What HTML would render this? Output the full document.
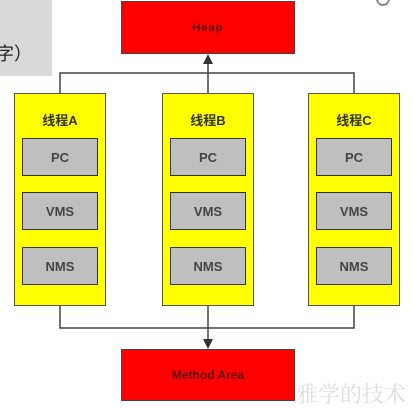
<!DOCTYPE html>
<html><head><meta charset="utf-8"><style>
body{margin:0;width:413px;height:408px;background:#fff;position:relative;overflow:hidden;font-family:"Liberation Sans","Noto Sans CJK SC",sans-serif}
.a{position:absolute;box-sizing:border-box}
.red{background:#f00;border:1.5px solid #444;color:#5a1010;font-weight:bold;font-size:11px;display:flex;align-items:center;justify-content:center;letter-spacing:1px}
.th{background:#ff0;border:1.5px solid #555;width:92px;top:93px;height:213px}
.tl{position:absolute;top:16px;width:100%;text-align:center;font-size:13px;font-weight:bold;color:#333}
.in{position:absolute;left:7px;width:76px;height:38px;background:#bfbfbf;border:1.5px solid #333;box-sizing:border-box;display:flex;align-items:center;justify-content:center;font-size:13px;font-weight:bold;color:#444}
</style></head><body>
<div class="a" style="left:0;top:0;width:52px;height:76px;background:#d9d9d9"></div>
<div class="a" style="left:-4px;top:40px;font-size:18px;color:#222">字）</div>
<div class="a" style="left:376px;top:-8px;width:14px;height:14px;border:2px solid #888;border-radius:50%"></div>
<div class="a red" style="left:121px;top:1px;width:174px;height:53px">Heap</div>
<div class="a red" style="left:121px;top:349px;width:174px;height:52px;font-size:12px;letter-spacing:0">Method Area</div>
<svg class="a" style="left:0;top:0" width="413" height="408">
<g stroke="#444" stroke-width="1.5" fill="none">
<path d="M60 93V73H354V93M208 93V62M60 306V328H354V306M208 306V340"/>
</g>
<path d="M203 64L208 54L213 64Z M203 339L208 349L213 339Z" fill="#333"/>
</svg>
<div class="a th" style="left:14px"><div class="tl">线程A</div><div class="in" style="top:44px">PC</div><div class="in" style="top:98px">VMS</div><div class="in" style="top:153px">NMS</div></div>
<div class="a th" style="left:162px"><div class="tl">线程B</div><div class="in" style="top:44px">PC</div><div class="in" style="top:98px">VMS</div><div class="in" style="top:153px">NMS</div></div>
<div class="a th" style="left:308px"><div class="tl">线程C</div><div class="in" style="top:44px">PC</div><div class="in" style="top:98px">VMS</div><div class="in" style="top:153px">NMS</div></div>
<div class="a" style="left:296px;top:378px;font-size:22px;color:#ddd;font-family:'Noto Serif CJK SC',serif">雅学的技术</div>
</body></html>
